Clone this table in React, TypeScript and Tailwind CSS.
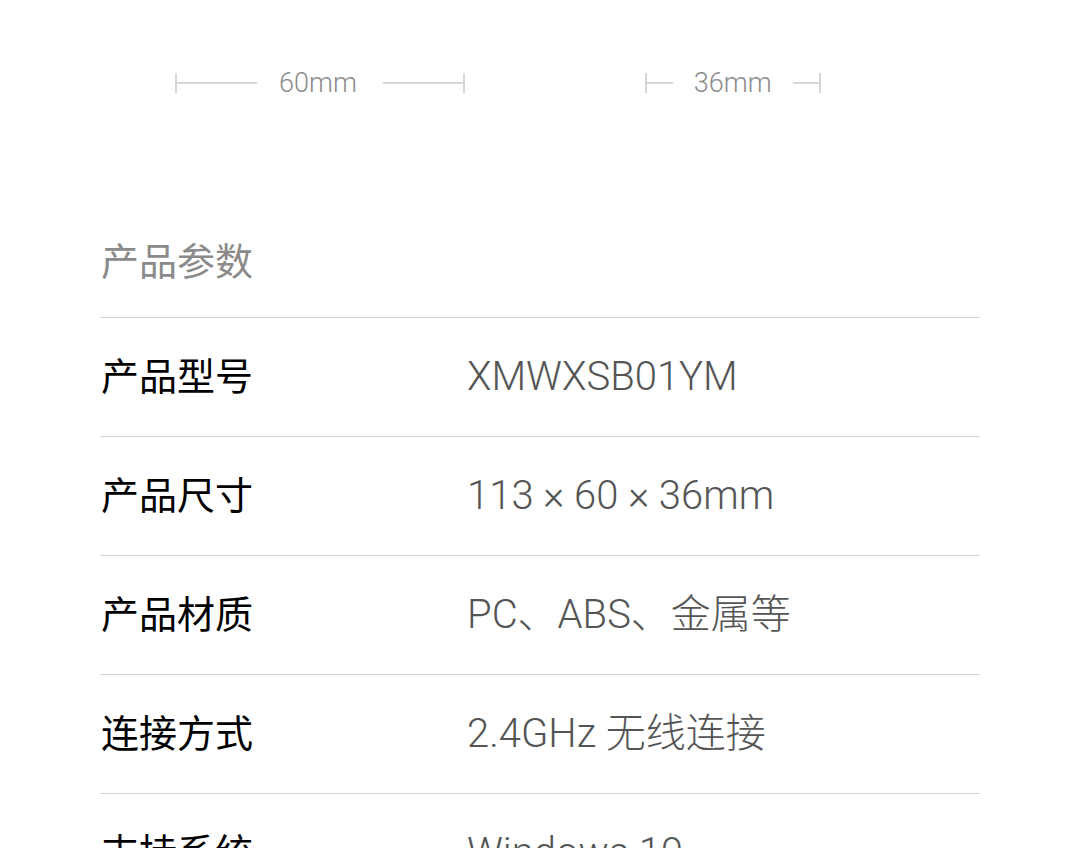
import React from 'react';

const specs: { label: string; value: string }[] = [
  { label: '产品型号', value: 'XMWXSB01YM' },
  { label: '产品尺寸', value: '113 × 60 × 36mm' },
  { label: '产品材质', value: 'PC、ABS、金属等' },
  { label: '连接方式', value: '2.4GHz 无线连接' },
  { label: '支持系统', value: 'Windows 10' },
];

function Dimension({ text, lineW, textCls }: { text: string; lineW: string; textCls: string }) {
  return (
    <div className="flex items-center">
      <div className="w-[2px] h-[20px] bg-[#d6d6d6]" />
      <div className={`${lineW} h-[2px] bg-[#d6d6d6]`} />
      <span className={`${textCls} text-[27px] font-light leading-none text-[#8c8c8c]`}>{text}</span>
      <div className={`${lineW} h-[2px] bg-[#d6d6d6]`} />
      <div className="w-[2px] h-[20px] bg-[#d6d6d6]" />
    </div>
  );
}

export default function App() {
  return (
    <div
      className="w-[1080px] h-[848px] overflow-hidden bg-white"
      style={{ fontFamily: 'Roboto, "Noto Sans CJK SC", sans-serif' }}
    >
      {/* Dimension marks */}
      <div className="flex items-center pl-[175px] pt-[73px] h-[93px]">
        <Dimension text="60mm" lineW="w-[80px]" textCls="ml-[22px] mr-[26px]" />
        <div className="w-[180px]" />
        <Dimension text="36mm" lineW="w-[26px]" textCls="ml-[21px] mr-[21px]" />
      </div>

      <div className="mx-[100px]">
        {/* Heading */}
        <div className="h-[224px] flex items-end pb-[36px]">
          <h2 className="text-[38px] leading-none text-[#8a8a8a] pl-[1px]">产品参数</h2>
        </div>

        {/* Spec rows */}
        {specs.map((s) => (
          <div key={s.label} className="h-[119px] border-t border-[#d4d4d4] flex items-center">
            <div className="w-[367px] text-[38px] leading-none text-black pl-[1px]">{s.label}</div>
            <div className="text-[40px] font-light leading-none text-[#555555]">{s.value}</div>
          </div>
        ))}
      </div>
    </div>
  );
}
